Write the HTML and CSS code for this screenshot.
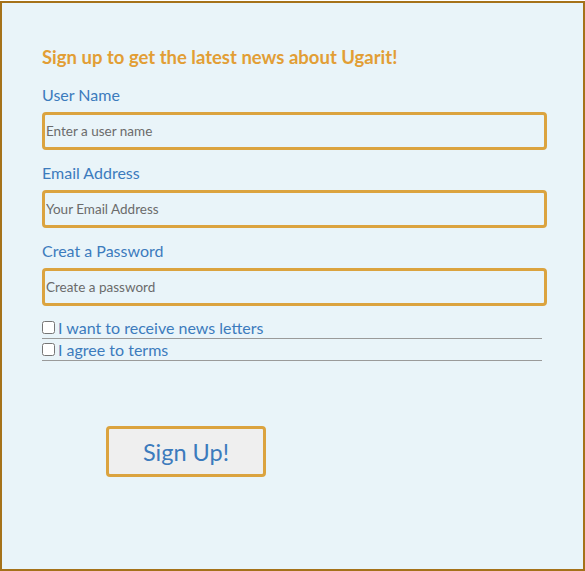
FILE: index.html
```html
<!DOCTYPE html>
<html lang="en">
<head>
<meta charset="utf-8">
<title>Sign up</title>
<link rel="stylesheet" href="styles.css">
</head>
<body>
<div class="page">
  <form class="signup">
    <h2 class="title">Sign up to get the latest news about Ugarit!</h2>
    <div class="field">
      <label class="label" for="user">User Name</label>
      <input class="input" id="user" type="text" placeholder="Enter a user name">
    </div>
    <div class="field">
      <label class="label" for="email">Email Address</label>
      <input class="input" id="email" type="email" placeholder="Your Email Address">
    </div>
    <div class="field">
      <label class="label" for="pw">Creat a Password</label>
      <input class="input" id="pw" type="password" placeholder="Create a password">
    </div>
    <div class="checks">
      <label class="check"><input type="checkbox" class="box"> I want to receive news letters</label>
      <label class="check"><input type="checkbox" class="box"> I agree to terms</label>
    </div>
    <button type="button" class="submit">Sign Up!</button>
  </form>
</div>
</body>
</html>
```
FILE: styles.css
```css
html, body {
  margin: 0;
  padding: 0;
  background: #ffffff;
}
body {
  font-family: Lato, "Noto Sans", sans-serif;
}
.page {
  box-sizing: border-box;
  width: 585px;
  height: 570px;
  margin-top: 1px;
  border: 2px solid #a5721a;
  background: #e9f4f9;
  padding: 42px 0 0 40px;
}
.signup {
  display: flex;
  flex-direction: column;
  align-items: flex-start;
}
.title {
  margin: 0 0 16px;
  font-size: 18.5px;
  line-height: 24px;
  font-weight: 700;
  color: #e29e35;
}
.field {
  display: flex;
  flex-direction: column;
  gap: 7px;
  margin-bottom: 13px;
}
.label {
  font-size: 16px;
  line-height: 20px;
  color: #3c7bbd;
}
.input {
  box-sizing: border-box;
  width: 505px;
  height: 38px;
  border: 3px solid #dba33f;
  border-radius: 4px;
  background: #e9f4f9;
  padding: 0 1px;
  font-family: inherit;
  font-size: 13.5px;
  color: #555;
  outline: none;
}
.input::placeholder {
  color: #6b6b6b;
  opacity: 1;
}
.checks {
  display: flex;
  flex-direction: column;
  margin-top: -2px;
}
.check {
  box-sizing: border-box;
  width: 500px;
  height: 22px;
  display: flex;
  align-items: center;
  gap: 1px;
  border-bottom: 1px solid #9a9a9a;
  font-size: 16px;
  color: #3c7bbd;
}
.box {
  width: 13px;
  height: 13px;
  margin: 0 2px 0 0;
}
.submit {
  box-sizing: border-box;
  margin: 65px 0 0 64px;
  width: 160px;
  height: 51px;
  border: 3px solid #dba33f;
  border-radius: 4px;
  background: #efefef;
  font-family: inherit;
  font-size: 23.5px;
  color: #3c7bbd;
  cursor: pointer;
}
```
